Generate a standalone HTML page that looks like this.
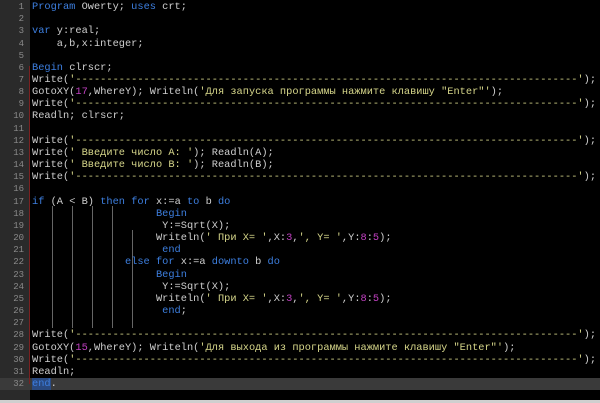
<!DOCTYPE html>
<html><head><meta charset="utf-8"><style>
html,body{margin:0;padding:0;}
body{width:600px;height:403px;background:#000;position:relative;overflow:hidden;font-family:"Liberation Mono",monospace;font-size:10.33px;}
.g{position:absolute;left:0;top:0;width:30px;height:400px;background:#2a2a2a;}
.bot{position:absolute;left:0;top:400px;width:600px;height:3px;background:#cfcfcf;}
.hl{position:absolute;left:0;top:378px;width:600px;height:12px;background:#3a3a3a;}
.n{position:absolute;left:0;width:24px;text-align:right;color:#8a8a8a;line-height:12px;font-size:9px;}
.l{position:absolute;left:32px;white-space:pre;color:#cfcfcf;line-height:12px;}
.k{color:#3d7fe0;}.s{color:#d6d68a;}.d{color:#c040c0;}
.red{position:absolute;left:29px;top:66px;width:1px;height:318px;background:#7a2020;}
.v{position:absolute;width:1px;background:#666;top:206px;height:122px;}
</style></head><body>
<div class="g"></div>
<div class="hl"></div>
<div class="red"></div>
<div class="v" style="left:52px"></div>
<div class="v" style="left:72px"></div>
<div class="v" style="left:92px"></div>
<div class="v" style="left:112px"></div>
<div class="v" style="left:132px;top:230px;height:98px"></div>
<div class="bot"></div>
<div id="c"></div>
<script>
var D="-".repeat(81);
var L=[
'<span class="k">Program</span> Owerty; <span class="k">uses</span> crt;',
'',
'<span class="k">var</span> y:real;',
'    a,b,x:integer;',
'',
'<span class="k">Begin</span> clrscr;',
'Write(<span class="s">\''+D+'\'</span>);',
'GotoXY(<span class="d">17</span>,WhereY); Writeln(<span class="s">\'Для запуска программы нажмите клавишу "Enter"\'</span>);',
'Write(<span class="s">\''+D+'\'</span>);',
'Readln; clrscr;',
'',
'Write(<span class="s">\''+D+'\'</span>);',
'Write(<span class="s">\' Введите число A: \'</span>); Readln(A);',
'Write(<span class="s">\' Введите число B: \'</span>); Readln(B);',
'Write(<span class="s">\''+D+'\'</span>);',
'',
'<span class="k">if</span> (A &lt; B) <span class="k">then</span> <span class="k">for</span> x:=a <span class="k">to</span> b <span class="k">do</span>',
'                    <span class="k">Begin</span>',
'                     Y:=Sqrt(X);',
'                    Writeln(<span class="s">\' При X= \'</span>,X:<span class="d">3</span>,<span class="s">\', Y= \'</span>,Y:<span class="d">8</span>:<span class="d">5</span>);',
'                     <span class="k">end</span>',
'               <span class="k">else</span> <span class="k">for</span> x:=a <span class="k">downto</span> b <span class="k">do</span>',
'                    <span class="k">Begin</span>',
'                     Y:=Sqrt(X);',
'                    Writeln(<span class="s">\' При X= \'</span>,X:<span class="d">3</span>,<span class="s">\', Y= \'</span>,Y:<span class="d">8</span>:<span class="d">5</span>);',
'                     <span class="k">end</span>;',
'',
'Write(<span class="s">\''+D+'\'</span>);',
'GotoXY(<span class="d">15</span>,WhereY); Writeln(<span class="s">\'Для выхода из программы нажмите клавишу "Enter"\'</span>);',
'Write(<span class="s">\''+D+'\'</span>);',
'Readln;',
'<span class="k" style="background:#2a4a80">end</span>.'
];
var h='';
for(var i=0;i<L.length;i++){var t=(1+i*12.16).toFixed(1);
h+='<div class="n" style="top:'+t+'px">'+(i+1)+'</div><div class="l" style="top:'+t+'px">'+L[i]+'</div>';}
document.getElementById('c').innerHTML=h;
</script>
</body></html>
